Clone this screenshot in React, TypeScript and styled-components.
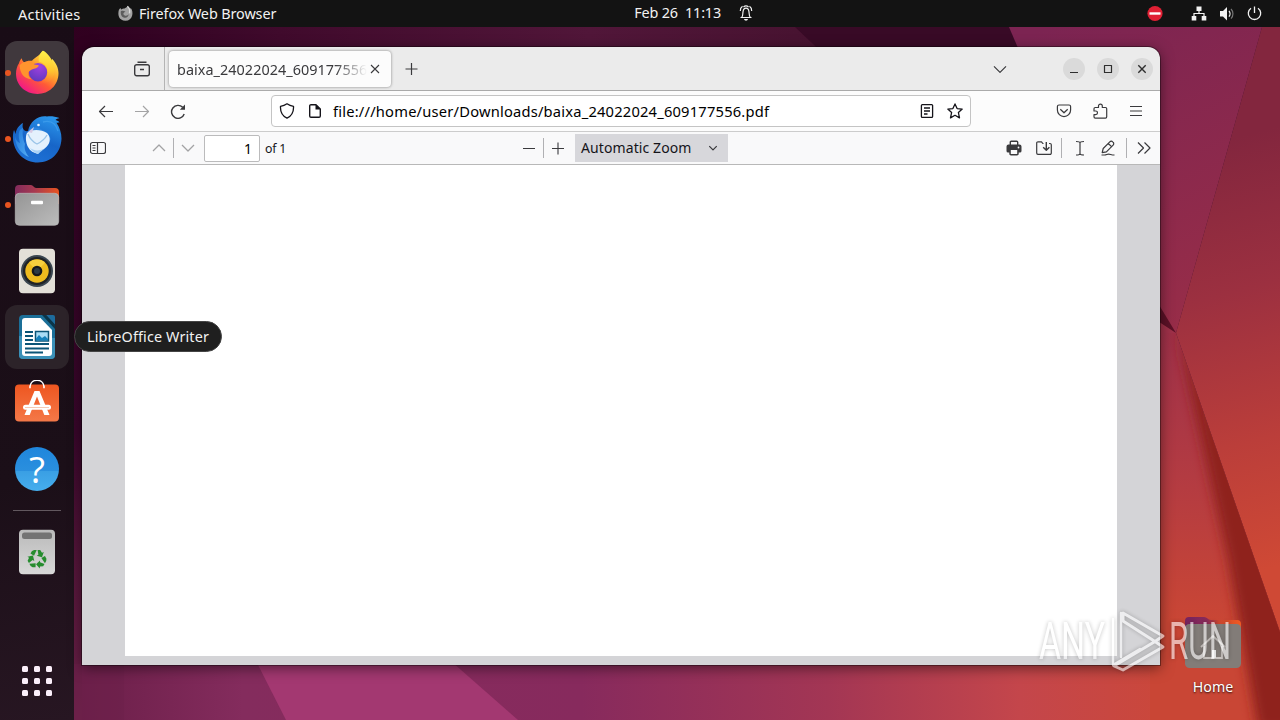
import React from 'react';
import styled, { createGlobalStyle } from 'styled-components';

const App = () => (
  <Desktop>
    <GlobalStyle />
    <Wallpaper />
    <TopBar>
      <Label $size={14.6} $spacing={0.15} $w={100}>Activities</Label>
      <FoxMini />
      <Label $size={14.4} $spacing={-0.1}>Firefox Web Browser</Label>
      <Clock>
        <Label $size={14.4} $spacing={-0.17}>Feb 26&nbsp; 11:13</Label>
        <BellIcon />
      </Clock>
      <Tray>
        <NoEntryIcon />
        <NetworkIcon />
        <VolumeIcon />
        <PowerIcon />
      </Tray>
    </TopBar>
    <Dock>
      <DockItem $bg="#40383d" $running><FirefoxIcon /></DockItem>
      <DockItem $running><ThunderbirdIcon /></DockItem>
      <DockItem $running><FilesIcon /></DockItem>
      <DockItem><RhythmboxIcon /></DockItem>
      <DockItem $bg="#2c2329"><WriterIcon /></DockItem>
      <DockItem><SoftwareIcon /></DockItem>
      <DockItem><HelpIcon /></DockItem>
      <DockDivider />
      <DockItem><TrashIcon /></DockItem>
      <AppGrid>
        {Array.from({ length: 9 }, (_, i) => <i key={i} />)}
      </AppGrid>
    </Dock>

    <BrowserWindow>
      <TabBar>
        <Slot $w={36} $ml={42}>
          <Icon>
            <path d="M3.500 1.200h9M2.600 3.700h10.800a1.900 1.900 0 0 1 1.900 1.900v7.200a1.900 1.900 0 0 1-1.900 1.900H2.600a1.900 1.900 0 0 1-1.900-1.900V5.600a1.900 1.900 0 0 1 1.900-1.900zM6 8.500h4" strokeWidth="1.400" />
          </Icon>
        </Slot>
        <TabSeparator />
        <Tab>
          <TabTitle>baixa_24022024_609177556</TabTitle>
          <Icon><path d="M4 4l8 8M12 4l-8 8" strokeWidth="1.100" /></Icon>
        </Tab>
        <Slot $w={42}>
          <Icon><path d="M7.500 2v12M1.500 8h12" /></Icon>
        </Slot>
        <WindowControls>
          <Slot $w={36}>
            <Icon><path d="M2 5.300l6 6 6-6" /></Icon>
          </Slot>
          <WindowButton $ml={45}><Icon><path d="M4 11.500h8" /></Icon></WindowButton>
          <WindowButton $ml={12}><Icon><path d="M4.500 4.500h7v7h-7z" strokeWidth="1.200" /></Icon></WindowButton>
          <WindowButton $ml={12}><Icon><path d="M4.300 4.300l7.400 7.400M11.700 4.300l-7.400 7.400" strokeWidth="1.400" /></Icon></WindowButton>
        </WindowControls>
      </TabBar>

      <NavBar>
        <Slot $w={36} $ml={6}>
          <Icon><path d="M15 8.500H1.500M7 3L1.500 8.500 7 14" /></Icon>
        </Slot>
        <Slot $w={36} $faded>
          <Icon><path d="M1 8.500h13.500M9 3l5.500 5.500L9 14" /></Icon>
        </Slot>
        <Slot $w={36}>
          <Icon>
            <path d="M14.200 11A6.500 6.500 0 1 1 12.700 4.300" strokeWidth="1.400" />
            <path d="M15 1.500v5.200H9.800z" fill="currentColor" stroke="none" />
          </Icon>
        </Slot>
        <UrlBox>
          <Slot $w={30}>
            <Icon><path d="M8 .8c1.800 1.300 4 2.200 6.500 2.600.3 5.300-1.300 9.200-6.500 11.800C2.800 12.600 1.200 8.700 1.500 3.400 4 3 6.200 2.100 8 .8z" strokeWidth="1.300" /></Icon>
          </Slot>
          <Slot $w={26}>
            <Icon>
              <path d="M4 1.700h5l4.300 4.300v7a1.300 1.300 0 0 1-1.300 1.300H4A1.300 1.300 0 0 1 2.700 13V3A1.300 1.300 0 0 1 4 1.700z" strokeWidth="1.400" />
              <path d="M8.500 1.500v5h5z" fill="currentColor" stroke="none" />
            </Icon>
          </Slot>
          <UrlText>file:///home/user/Downloads/baixa_24022024_609177556.pdf</UrlText>
          <Slot $w={28}>
            <Icon><path d="M3.400 1.600h9.200a1 1 0 0 1 1 1v10.800a1 1 0 0 1-1 1H3.400a1 1 0 0 1-1-1V2.600a1 1 0 0 1 1-1zM5 5h6M5 8h6M5 11h3.500" strokeWidth="1.300" /></Icon>
          </Slot>
          <Slot $w={28}>
            <Icon><path d="M8 .9l2.100 4.700 5.100.5-3.800 3.500 1.100 5.300L8 12.300l-4.500 2.600 1.100-5.300L.8 6.100l5.100-.5z" strokeWidth="1.300" /></Icon>
          </Slot>
        </UrlBox>
        <Slot $w={36} $ml={75}>
          <Icon><path d="M3 2h10a1.600 1.600 0 0 1 1.600 1.600V7a6.600 6.600 0 0 1-13.200 0V3.600A1.600 1.600 0 0 1 3 2zM4.300 6.200L8 9.800l3.700-3.600" /></Icon>
        </Slot>
        <Slot $w={36}>
          <Icon><path d="M2 8V5.800C2 5 2.500 4.500 3.300 4.500h3.200V3a1.900 1.900 0 0 1 3.800 0v1.500h3.200c.7 0 1.200.5 1.200 1.300v8c0 .8-.5 1.300-1.200 1.300H3.300C2.500 15.100 2 14.600 2 13.800v-2.200h1.700a1.800 1.800 0 0 0 0-3.600z" /></Icon>
        </Slot>
        <Slot $w={36}>
          <Icon><path d="M2 3.500h12M2 8h12M2 12.500h12" /></Icon>
        </Slot>
      </NavBar>

      <PdfBar>
        <PdfLeft>
          <Slot $w={28} $ml={2}>
            <Icon><path d="M2.500 2.500h11a2 2 0 0 1 2 2v7a2 2 0 0 1-2 2h-11a2 2 0 0 1-2-2v-7a2 2 0 0 1 2-2zM7.500 2.500v11M2.500 5.500h3M2.500 8h3M2.500 10.500h3" /></Icon>
          </Slot>
          <Slot $w={28} $ml={33} $faded>
            <Icon><path d="M2 11l6-6 6 6" strokeWidth="1.300" /></Icon>
          </Slot>
          <PdfSeparator />
          <Slot $w={27} $faded>
            <Icon><path d="M2 5l6 6 6-6" strokeWidth="1.300" /></Icon>
          </Slot>
          <PageNumber>1</PageNumber>
          <OfPages>of 1</OfPages>
        </PdfLeft>
        <Slot $w={28}>
          <Icon><path d="M2 8.500h12" strokeWidth="1.100" /></Icon>
        </Slot>
        <PdfSeparator />
        <Slot $w={27}>
          <Icon><path d="M8 2.500v12M2 8.500h12" strokeWidth="1.100" /></Icon>
        </Slot>
        <ZoomSelect>
          <Label $size={14} $spacing={0.1} $color="#15141a">Automatic Zoom</Label>
          <Icon $size={12}><path d="M3 5.500l5 5 5-5" strokeWidth="1.700" /></Icon>
        </ZoomSelect>
        <PdfRight>
          <Slot $w={30}>
            <Icon>
              <path d="M4.300 5V2.300c0-.6.300-1 1-1h5.400c.7 0 1 .4 1 1V5" strokeWidth="1.400" />
              <path d="M2.500 4.500h11a2 2 0 0 1 2 2V11a1.600 1.600 0 0 1-1.600 1.600h-1.200v1.200c0 1-.7 1.700-1.700 1.700H5c-1 0-1.700-.7-1.700-1.700v-1.200H2.100A1.600 1.600 0 0 1 .5 11V6.500a2 2 0 0 1 2-2z" fill="currentColor" stroke="none" />
              <path d="M4.800 10h6.400v4H4.800z" fill="#f9f9fa" stroke="none" />
              <circle cx="12.500" cy="7.500" r=".9" fill="#f9f9fa" stroke="none" />
            </Icon>
          </Slot>
          <Slot $w={30}>
            <Icon>
              <path d="M7.500 3.500H6.800L5.500 1.800H2A1.300 1.300 0 0 0 .7 3.100v10A1.300 1.300 0 0 0 2 14.400h12a1.300 1.300 0 0 0 1.300-1.300V4.800A1.300 1.300 0 0 0 14 3.500h-1" />
              <path d="M10.300 2v8M7.200 7.200l3.100 3.100 3.100-3.100" strokeWidth="1.400" />
            </Icon>
          </Slot>
          <PdfSeparator $ml={2} />
          <Slot $w={28} $ml={4}>
            <Icon><path d="M4 1.500c2.300 0 4 .2 4 1.500 0-1.300 1.700-1.500 4-1.500M8 3v10.500M4 15c2.300 0 4-.2 4-1.500 0 1.300 1.700 1.500 4 1.500" /></Icon>
          </Slot>
          <Slot $w={28}>
            <Icon>
              <path d="M2.200 12.700l1-4.200 6.600-6.700a2 2 0 0 1 2.900 0l.4.400a2 2 0 0 1 0 2.900l-6.700 6.700zM8.300 3.500l3.200 3.200" />
              <path d="M1.500 15h3c1.800 0 2.600-.9 4-.9 1.600 0 2.500.900 4 .900h2" />
            </Icon>
          </Slot>
          <PdfSeparator $ml={4} />
          <Slot $w={29} $ml={2}>
            <Icon><path d="M2 2.500L7.500 8 2 13.500M8.500 2.500L14 8l-5.500 5.500" /></Icon>
          </Slot>
        </PdfRight>
      </PdfBar>
      <Viewer>
        <Page />
      </Viewer>
    </BrowserWindow>

    <Tooltip>
      <Label $size={14.4} $spacing={0.13}>LibreOffice Writer</Label>
    </Tooltip>
    <HomeShortcut>
      <HomeFolder />
      <Label $size={14.2} $color="#fff">Home</Label>
    </HomeShortcut>
    <Watermark />
  </Desktop>
);

const Wallpaper = () => (
  <WallpaperSvg viewBox="0 0 1280 720">
    <defs>
      <linearGradient id="base" gradientUnits="userSpaceOnUse" x1="74" y1="0" x2="1010" y2="0">
        <stop offset="0" stopColor="#2d001f" />
        <stop offset=".22" stopColor="#400a2c" />
        <stop offset=".55" stopColor="#511639" />
        <stop offset=".77" stopColor="#481331" />
        <stop offset="1" stopColor="#3f0d2b" />
      </linearGradient>
      <linearGradient id="leftEdge" x1="0" y1="0" x2="0" y2="1">
        <stop offset="0" stopColor="#30001f" />
        <stop offset=".6" stopColor="#38062a" />
        <stop offset=".78" stopColor="#541539" />
        <stop offset="1" stopColor="#6d2149" />
      </linearGradient>
      <linearGradient id="bottom" gradientUnits="userSpaceOnUse" x1="74" y1="0" x2="1200" y2="0">
        <stop offset="0" stopColor="#6a1e48" />
        <stop offset=".15" stopColor="#842c5d" />
        <stop offset=".45" stopColor="#872a5d" />
        <stop offset=".67" stopColor="#a33654" />
        <stop offset=".84" stopColor="#c4464b" />
        <stop offset="1" stopColor="#cc4837" />
      </linearGradient>
      <linearGradient id="upper" gradientUnits="userSpaceOnUse" x1="1050" y1="27" x2="1190" y2="330">
        <stop offset="0" stopColor="#7c2452" />
        <stop offset="1" stopColor="#982d48" />
      </linearGradient>
      <linearGradient id="right" gradientUnits="userSpaceOnUse" x1="1190" y1="150" x2="1300" y2="560">
        <stop offset="0" stopColor="#83263e" />
        <stop offset=".35" stopColor="#9c3040" />
        <stop offset=".7" stopColor="#bb3e3a" />
        <stop offset="1" stopColor="#cf4935" />
      </linearGradient>
      <linearGradient id="lower" gradientUnits="userSpaceOnUse" x1="0" y1="333" x2="0" y2="620">
        <stop offset="0" stopColor="#9f3149" />
        <stop offset=".5" stopColor="#b33b42" />
        <stop offset="1" stopColor="#c94635" />
      </linearGradient>
      <filter id="soft" x="-50%" y="-10%" width="200%" height="120%">
        <feGaussianBlur stdDeviation="6" />
      </filter>
      <clipPath id="belowFold">
        <path d="M1120 333H1176L1280 632V720H1120z" />
      </clipPath>
    </defs>
    <rect width="1280" height="720" fill="url(#base)" />
    <path d="M795 27L830 60H1030V27z" fill="#380a26" />
    <rect width="90" height="720" fill="url(#leftEdge)" />
    <rect x="82" y="655" width="1198" height="65" fill="url(#bottom)" />
    <rect x="74" y="664" width="50" height="56" fill="#6b1f49" opacity=".5" />
    <path d="M253 655L286 720H518L444 655z" fill="#a33871" />
    <path d="M1009 27L1140 333H1176L1262 27z" fill="url(#upper)" />
    <path d="M1262 27L1176 333L1280 632V27z" fill="url(#right)" />
    <path d="M1150 310L1176 333L1280 632V720H1150z" fill="url(#lower)" />
    <g clipPath="url(#belowFold)">
      <path d="M1176 326L1228 560L1258 730H1310V640z" fill="#8f241d" filter="url(#soft)" />
    </g>
    <path d="M1176 333L1150 290V316z" fill="#5c1127" />
  </WallpaperSvg>
);

const FoxMini = () => (
  <SmallIcon $w={15} $mr={6} viewBox="0 0 16 16">
    <path d="M1 4l1.500-2 1 1.600C4.500 2.800 6 2.500 7 2.700 8 2 9.500 1.600 10 .3c1.500.7 2 2 2.600 2.700.6-.1.900-.5 1-1C17 6 16 15.500 8 15.700.5 15.500-.5 9 1 4z" fill="#a3a3a3" />
    <path d="M3 5.500c2-1 3 .2 5 .3-1 1-2 1-2.300 2.600 1 2.500 4.500 2.500 5.800.2C11.300 11.500 9 13 7 12.500 4 12 2.500 9 3 5.500z" fill="#5c5c5c" />
    <path d="M10 .3c2 1.500 3 4 2.300 7.500" stroke="#d8d8d8" strokeWidth="1.500" fill="none" />
  </SmallIcon>
);

const BellIcon = () => (
  <SmallIcon $w={16} $ml={17} viewBox="0 0 16 16">
    <g fill="none" stroke="#f2f2f2" strokeWidth="1.200">
      <path d="M2.500 12.500h11M3.700 12.300c1.300-1.300 1-3.500 1.300-5.500C5.300 4.500 6.300 3.200 8 3.200s2.700 1.300 3 3.600c.3 2 0 4.200 1.300 5.500" />
      <path d="M4.500 1.300C3 2.300 2.200 4 2.300 6M11.500 1.300c1.500 1 2.300 2.700 2.200 4.700M5.500 2C7 .6 9 .6 10.500 2" />
    </g>
    <path d="M6 14h4c-.5 2.200-3.500 2.200-4 0z" fill="#f2f2f2" />
  </SmallIcon>
);

const NoEntryIcon = () => (
  <SmallIcon $w={16} $mr={28} viewBox="0 0 16 16">
    <circle cx="8" cy="7.500" r="7.600" fill="#e02034" />
    <rect x="2.500" y="6.300" width="11" height="2.400" fill="#fff" />
  </SmallIcon>
);

const NetworkIcon = () => (
  <SmallIcon $w={16} $mr={12} viewBox="0 0 16 16">
    <path d="M5.500 .5h5V5h-5zM.7 10h4.600v4.500H.7zM10.700 10h4.600v4.500h-4.600z" fill="#f2f2f2" />
    <path d="M8 5v2.500M3 10V7.500h10V10" stroke="#f2f2f2" strokeWidth="1.200" fill="none" />
  </SmallIcon>
);

const VolumeIcon = () => (
  <SmallIcon $w={16} $mr={12} viewBox="0 0 16 16">
    <path d="M1 5h3l4-4v13.500L4 10.500H1z" fill="#f2f2f2" />
    <path d="M10 5c1.300 1.500 1.300 4.100 0 5.600" stroke="#f2f2f2" strokeWidth="1.300" fill="none" />
    <path d="M12 3c2.600 2.600 2.600 7 0 9.600" stroke="#777" strokeWidth="1.200" fill="none" />
  </SmallIcon>
);

const PowerIcon = () => (
  <SmallIcon $w={16} viewBox="0 0 16 16">
    <path d="M4 2.200a6.200 6.200 0 1 0 7 0M7.500 .5V7" stroke="#f2f2f2" strokeWidth="1.300" fill="none" />
  </SmallIcon>
);

const FirefoxIcon = () => (
  <svg width="48" height="48" viewBox="0 .7 48 48">
    <defs>
      <linearGradient id="ffBody" x1=".85" y1=".1" x2=".2" y2=".95">
        <stop offset="0" stopColor="#fff44f" />
        <stop offset=".35" stopColor="#ffa32c" />
        <stop offset=".6" stopColor="#ff5a36" />
        <stop offset="1" stopColor="#f0148c" />
      </linearGradient>
      <radialGradient id="ffGlobe" cx=".6" cy=".2" r=".9">
        <stop offset="0" stopColor="#a040e0" />
        <stop offset="1" stopColor="#5a38bc" />
      </radialGradient>
      <linearGradient id="ffTail" x1="0" y1="0" x2="0" y2="1">
        <stop offset="0" stopColor="#fff14a" />
        <stop offset=".6" stopColor="#ffc52f" />
        <stop offset="1" stopColor="#ff8a2e" stopOpacity="0" />
      </linearGradient>
    </defs>
    <path d="M6 15c.5-2 1.500-3.800 2.700-5 .3 2 1.300 3.300 2.300 4 2-1.300 5-2 8-1.500C22 9 26 8 29.500 2.500c4 2 7 6.500 8.500 10.500.8-.8 1-1.500 1-2.500 4 4 6.500 9 6.500 14.500C45.500 37 36 45.700 24.500 45.700 12.500 45.700 3 37 3 25.500 3 21.500 4 18 6 15z" fill="url(#ffBody)" />
    <circle cx="25" cy="24" r="9.200" fill="url(#ffGlobe)" />
    <path d="M30.500 2.500C26.500 5 25 10 26 13.500c5 1 8.500 4.500 8.500 10.500-.5 6-5 10.500-11 11 8 3 17-2 18-11C42 14 36 6 30.500 2.500z" fill="url(#ffTail)" />
    <path d="M6.500 17c4-4.500 10-4.500 15-.8 2 .5 3.500.5 4.500 1.300-1.500 2.500-4.500 3-6.500 3.500-1.500 1-3 1-4 3.300-.5 3.200 1.500 5.700 3.500 6.700C12 31 7 26 6.500 17z" fill="#ff942e" />
  </svg>
);

const ThunderbirdIcon = () => (
  <svg width="50" height="50" viewBox="0 0 50 50">
    <defs>
      <linearGradient id="tbBody" x1=".7" y1="0" x2=".3" y2="1">
        <stop offset="0" stopColor="#2a94ea" />
        <stop offset=".5" stopColor="#1765c8" />
        <stop offset="1" stopColor="#1f72d6" />
      </linearGradient>
      <linearGradient id="tbWing" x1="0" y1="0" x2="1" y2="1">
        <stop offset="0" stopColor="#1f78d8" />
        <stop offset="1" stopColor="#54acf4" />
      </linearGradient>
    </defs>
    <path d="M11 9C9.500 14 12 18 16 17 18 7 27 1 35 2.500c4-.5 8 0 12.500 1.500-2 .5-3 1-4 2 2 .5 3 1 4 2.500-1.500-.3-2 0-3 .3 3 4.500 5 10 5 16C49 39 39 48.500 26 48.500 12 48.500 2 38 1 25c-.3-3 .2-7 1-9 .8 1.500 1 3 1.500 4C4 15.500 7 11 11 9z" fill="url(#tbBody)" />
    <path d="M3 22c0 10 6 18 14 21-4-5-5-9-4-13-2-5-3-9-2-16C6 15 6 22 8 29 5 28 3.500 25 3 22z" fill="url(#tbWing)" />
    <path d="M17 16c3-4 9-3 13 0 5 2 8 6 9 10l-5-3c-5-6-11-7-17-5z" fill="#2d86e0" />
    <path d="M15 19c4-4 14-4 20 0 3 3 4 8 1 12-2 3-5 5-8 6l-2 3c-4-1-8-3-10-7-2-4-3-10-1-14z" fill="#e4f1fd" />
    <path d="M16 20c2 5 5 8 9 10 4-2 8-5 10-9" fill="none" stroke="#9ac4e8" strokeWidth="1.300" />
    <path d="M18 34c4 3 9 3 14 1-2 2-4 3-6 5-3-1-6-3-8-6z" fill="#a9d2f6" />
    <path d="M16 18l6-5-2 6z" fill="#d8c9e4" />
    <circle cx="26.500" cy="11" r="1.300" fill="#e8f5ff" />
    <path d="M31 8c8-2 13 2 15 9" stroke="#48a5f0" strokeWidth="1.300" fill="none" opacity=".6" />
  </svg>
);

const FilesIcon = () => (
  <svg width="46" height="44" viewBox="0 0 46 44">
    <defs>
      <linearGradient id="folderBack" x1="0" y1="0" x2="1" y2="0">
        <stop offset="0" stopColor="#822b5c" />
        <stop offset=".45" stopColor="#a83a50" />
        <stop offset="1" stopColor="#e95420" />
      </linearGradient>
      <linearGradient id="folderFront" x1="0" y1="0" x2="1" y2="1">
        <stop offset="0" stopColor="#959595" />
        <stop offset="1" stopColor="#bcbcbc" />
      </linearGradient>
    </defs>
    <path d="M1 6a4 4 0 0 1 4-4h12c2 0 3 3 5 3h19a4 4 0 0 1 4 4v12H1z" fill="url(#folderBack)" />
    <rect x="1.300" y="10.300" width="43.400" height="32" rx="4" fill="url(#folderFront)" stroke="#b9b9b9" strokeWidth=".7" />
    <rect x="17" y="17.800" width="12" height="3.400" rx="1" fill="#fff" />
  </svg>
);

const RhythmboxIcon = () => (
  <svg width="38" height="46" viewBox="0 0 38 46">
    <rect x="1" y=".7" width="36" height="44.600" rx="4" fill="#e3e0d8" />
    <circle cx="19" cy="23" r="16" fill="#3a4650" />
    <circle cx="19" cy="23" r="14" fill="#202326" />
    <circle cx="19" cy="23" r="11.700" fill="#eebb1e" />
    <path d="M19 23L11 14.700a11.500 11.500 0 0 1 16 0z" fill="#f7cf3e" />
    <circle cx="19" cy="23" r="5.300" fill="#17191c" />
    <circle cx="19" cy="23" r="3" fill="#2c3a45" />
  </svg>
);

const WriterIcon = () => (
  <svg width="38" height="46" viewBox="0 0 38 46">
    <path d="M1 5a4 4 0 0 1 4-4h22l10 11v29a4 4 0 0 1-4 4H5a4 4 0 0 1-4-4z" fill="#1b6f98" />
    <path d="M1 22l36 2v17a4 4 0 0 1-4 4H5a4 4 0 0 1-4-4z" fill="#3b91b8" />
    <path d="M28 1h7a2 2 0 0 1 2 2v8z" fill="#1d6b9c" />
    <path d="M24 1h4l9 9.500V15z" fill="#0b3549" />
    <path d="M4 7a3 3 0 0 1 3-3h15.500L34 16v23a3 3 0 0 1-3 3H7a3 3 0 0 1-3-3z" fill="#fff" />
    <path d="M7 18h8M7 22h8M7 26h8M7 30h24M7 34.500h24M7 38.500h18" stroke="#0b5577" strokeWidth="1.900" />
    <rect x="17.500" y="17.500" width="13" height="9.500" fill="#a8dcf5" stroke="#0b5577" strokeWidth="1.500" />
    <path d="M18 26.500v-2l3-3.500 3 3 3-2 3 3v1.500z" fill="#1681ba" />
  </svg>
);

const SoftwareIcon = () => (
  <svg width="46" height="46" viewBox="0 2 46 46">
    <defs>
      <linearGradient id="bag" x1="0" y1="0" x2="0" y2="1">
        <stop offset="0" stopColor="#ee5620" />
        <stop offset="1" stopColor="#f47848" />
      </linearGradient>
    </defs>
    <rect x="1" y="6.500" width="44" height="37" rx="4" fill="url(#bag)" />
    <path d="M16 9.500V7.500C17 -.5 29 -.5 30 7.500v2" fill="none" stroke="#fff" strokeWidth="1.600" transform="translate(0 .8)" />
    <path d="M20.500 13h5L35.500 37h-5.200L23 18.500 15.700 37h-5.200z" fill="#fff" />
    <rect x="9" y="26.800" width="28" height="5" rx="2.500" fill="#fff" />
    <path d="M11 29.500h24" stroke="#f3b193" strokeWidth=".7" />
  </svg>
);

const HelpIcon = () => (
  <HelpBadge>?</HelpBadge>
);

const TrashIcon = () => (
  <svg width="38" height="46" viewBox="0 0 38 46">
    <defs>
      <linearGradient id="bin" x1="0" y1="0" x2="0" y2="1">
        <stop offset="0" stopColor="#bababa" />
        <stop offset="1" stopColor="#d8d8d8" />
      </linearGradient>
    </defs>
    <rect x="1" y=".7" width="36" height="44.600" rx="4" fill="url(#bin)" />
    <rect x="4" y="3.500" width="30" height="6.500" rx="2.500" fill="#737373" />
    <g transform="translate(19 30)" fill="#268c2e">
      {[0, 120, 240].map(angle => (
        <g key={angle} transform={`rotate(${angle})`}>
          <path d="M-2.800-9H-.3L-3-3.300-6.500-5.400-5-8z" />
          <path d="M.6-9H3.200L5-6.300l1.800-.8L5-1.800-.3-3.300l1.700-1z" />
        </g>
      ))}
    </g>
  </svg>
);

const HomeFolder = () => (
  <svg width="58" height="54" viewBox="0 0 58 54">
    <defs>
      <linearGradient id="homeBack" x1="0" y1="0" x2="1" y2="0">
        <stop offset="0" stopColor="#75235f" />
        <stop offset=".4" stopColor="#8a2b58" />
        <stop offset=".6" stopColor="#c8452f" />
        <stop offset="1" stopColor="#f05a22" />
      </linearGradient>
    </defs>
    <path d="M1 6a4 4 0 0 1 4-4h15c3 0 4 3 7 3h26a4 4 0 0 1 4 4v14H1z" fill="url(#homeBack)" />
    <rect x="1" y="9" width="56" height="44" rx="4.500" fill="#827c78" />
    <path d="M17 32l12-11 12 11M20 31v12h18V31" fill="none" stroke="#c9c4c1" strokeWidth="1.800" />
    <path d="M28 35h4v8h-4z" fill="#eee" />
  </svg>
);

const Watermark = () => (
  <WatermarkSvg width="206" height="72" viewBox="0 0 206 72">
    <text x="3" y="53" textLength="66" lengthAdjust="spacingAndGlyphs">ANY</text>
    <g fill="none" strokeLinejoin="round" strokeLinecap="round" strokeWidth="3">
      <path d="M87 7l40 23-8 5.500 8 5.500-40 23-9-4 41-24.500L87 15z" fill="#888" fillOpacity=".12" />
      <path d="M85 7v44M77 13v46l27-16" strokeWidth="2.400" />
    </g>
    <text x="133" y="53" textLength="62" lengthAdjust="spacingAndGlyphs">RUN</text>
  </WatermarkSvg>
);

export default App;

const GlobalStyle = createGlobalStyle`
  * {
    box-sizing: border-box;
  }
  body {
    margin: 0;
    overflow: hidden;
    font-family: 'Noto Sans', 'Open Sans', sans-serif;
  }
`;

const Desktop = styled.div`
  position: relative;
  width: 1280px;
  height: 720px;
  overflow: hidden;
  background: #2c001e;
`;

const WallpaperSvg = styled.svg`
  position: absolute;
  inset: 0;
`;

const Label = styled.span<{ $size: number; $spacing?: number; $color?: string; $w?: number }>`
  font-size: ${props => props.$size}px;
  letter-spacing: ${props => props.$spacing || 0}px;
  color: ${props => props.$color || '#f2f2f2'};
  width: ${props => (props.$w ? `${props.$w}px` : 'auto')};
  line-height: 20px;
  white-space: nowrap;
`;

const SmallIcon = styled.svg<{ $w: number; $ml?: number; $mr?: number }>`
  width: ${props => props.$w}px;
  height: ${props => props.$w}px;
  margin-left: ${props => props.$ml || 0}px;
  margin-right: ${props => props.$mr || 0}px;
  flex: none;
  overflow: visible;
`;

const TopBar = styled.header`
  position: relative;
  display: flex;
  align-items: center;
  height: 27px;
  padding: 0 17px 0 18px;
  background: #131313;
`;

const Clock = styled.div`
  display: flex;
  align-items: center;
  margin-left: 358px;
  padding-bottom: 1px;
`;

const Tray = styled.div`
  display: flex;
  align-items: center;
  margin-left: auto;
`;

const Dock = styled.nav`
  position: relative;
  display: flex;
  flex-direction: column;
  align-items: center;
  gap: 2px;
  width: 74px;
  height: 693px;
  padding-top: 14px;
  background: linear-gradient(170deg, #190c16 0%, #1b0f18 65%, #271622 100%);
`;

const DockItem = styled.div<{ $bg?: string; $running?: boolean }>`
  position: relative;
  display: flex;
  align-items: center;
  justify-content: center;
  width: 64px;
  height: 64px;
  flex: none;
  border-radius: 12px;
  background: ${props => props.$bg || 'transparent'};
  &::before {
    content: '';
    display: ${props => (props.$running ? 'block' : 'none')};
    position: absolute;
    left: 0;
    top: 29px;
    width: 6px;
    height: 6px;
    border-radius: 50%;
    background: #e95420;
  }
`;

const HelpBadge = styled.div`
  width: 44px;
  height: 44px;
  border-radius: 50%;
  background: linear-gradient(#1f86dc 0%, #2a8fde 54%, #3a9fe4 55%, #46aeee 100%);
  color: #fff;
  font-family: 'Open Sans', sans-serif;
  font-size: 37px;
  line-height: 44px;
  text-align: center;
`;

const DockDivider = styled.div`
  width: 48px;
  height: 1px;
  margin: 7px 0;
  background: #62585f;
`;

const AppGrid = styled.div`
  display: grid;
  grid-template-columns: repeat(3, 6px);
  gap: 6px;
  margin-top: 80px;
  & i {
    height: 6px;
    border-radius: 1.5px;
    background: #fbeffa;
  }
`;

const BrowserWindow = styled.main`
  position: absolute;
  left: 82px;
  top: 47px;
  display: flex;
  flex-direction: column;
  width: 1078px;
  height: 618px;
  overflow: hidden;
  border-radius: 12px 12px 0 0;
  background: #ebebeb;
  color: #3a3a3d;
  box-shadow: 0 0 0 1px rgba(0, 0, 0, 0.35), 0 3px 14px rgba(0, 0, 0, 0.5);
`;

const Slot = styled.div<{ $w: number; $ml?: number; $faded?: boolean }>`
  display: flex;
  justify-content: center;
  align-items: center;
  flex: none;
  width: ${props => props.$w}px;
  margin-left: ${props => props.$ml || 0}px;
  opacity: ${props => (props.$faded ? 0.45 : 1)};
`;

const Icon = styled.svg.attrs({ viewBox: '0 0 16 16' })<{ $size?: number }>`
  width: ${props => props.$size || 16}px;
  height: ${props => props.$size || 16}px;
  flex: none;
  fill: none;
  stroke: currentColor;
  stroke-width: 1.2;
  stroke-linejoin: round;
`;

const TabBar = styled.div`
  display: flex;
  align-items: center;
  height: 44px;
  padding-right: 7px;
  border-bottom: 1px solid #aaa;
`;

const TabSeparator = styled.div`
  width: 1px;
  height: 43px;
  margin: 0 3px 0 4px;
  background: #b4b4b4;
`;

const Tab = styled.div`
  display: flex;
  align-items: center;
  width: 222px;
  height: 36px;
  margin-left: 1px;
  padding: 0 8px;
  border-radius: 4px;
  background: #fcfcfc;
  box-shadow: 0 0 3px rgba(0, 0, 0, 0.45);
`;

const TabTitle = styled.div`
  width: 190px;
  padding-top: 2px;
  font-size: 14.4px;
  letter-spacing: 0.05px;
  white-space: nowrap;
  mask-image: linear-gradient(to left, transparent, #000 32px);
`;

const WindowControls = styled.div`
  display: flex;
  align-items: center;
  margin-left: auto;
`;

const WindowButton = styled.div<{ $ml: number }>`
  display: flex;
  align-items: center;
  justify-content: center;
  width: 22px;
  height: 22px;
  margin-left: ${props => props.$ml}px;
  border-radius: 50%;
  background: #dadada;
  color: #2e2e2e;
`;

const NavBar = styled.div`
  display: flex;
  align-items: center;
  height: 41px;
  border-bottom: 1px solid #ccc;
  background: #fcfcfc;
`;

const UrlBox = styled.div`
  display: flex;
  align-items: center;
  width: 700px;
  height: 32px;
  margin-left: 75px;
  padding-right: 1px;
  border: 1px solid #c4c4c4;
  border-radius: 4px;
  background: #fff;
  color: #15141a;
`;

const UrlText = styled.div`
  flex: 1;
  padding-left: 5px;
  font-size: 14.7px;
  letter-spacing: 0.2px;
  color: #000;
  white-space: nowrap;
`;

const PdfBar = styled.div`
  display: flex;
  align-items: center;
  height: 33px;
  border-bottom: 1px solid #b8b8b8;
  background: #f9f9fa;
`;

const PdfLeft = styled.div`
  display: flex;
  align-items: center;
  width: 433px;
`;

const PdfSeparator = styled.div<{ $ml?: number }>`
  width: 1px;
  height: 20px;
  margin-left: ${props => props.$ml || 0}px;
  background: #b0b0b3;
`;

const PageNumber = styled.div`
  width: 56px;
  height: 27px;
  margin: 0 5px 0 3px;
  padding-right: 7px;
  border: 1px solid #bbbbbc;
  border-radius: 2px;
  background: #fff;
  color: #000;
  font-size: 14px;
  line-height: 26px;
  text-align: right;
`;

const OfPages = styled.span`
  padding-top: 1px;
  color: #15141a;
  font-size: 12.3px;
  letter-spacing: -0.2px;
`;

const ZoomSelect = styled.div`
  display: flex;
  align-items: center;
  justify-content: space-between;
  width: 153px;
  height: 28px;
  margin-left: 4px;
  padding: 0 9px 0 6px;
  background: #d7d7db;
`;

const PdfRight = styled.div`
  display: flex;
  align-items: center;
  margin-left: auto;
  padding-right: 2px;
`;

const Viewer = styled.div`
  flex: 1;
  padding: 0 43px 9px;
  background: #d4d4d7;
`;

const Page = styled.div`
  height: 100%;
  background: #fff;
`;

const Tooltip = styled.div`
  position: absolute;
  left: 74px;
  top: 321px;
  display: flex;
  align-items: center;
  width: 148px;
  height: 31px;
  padding-left: 12px;
  border: 1px solid #444;
  border-radius: 16px;
  background: #1f1f1f;
`;

const HomeShortcut = styled.div`
  position: absolute;
  left: 1184px;
  top: 615px;
  display: flex;
  flex-direction: column;
  align-items: center;
  gap: 8px;
  width: 58px;
  text-shadow: 0 1px 2px rgba(0, 0, 0, 0.8);
`;

const WatermarkSvg = styled.svg`
  position: absolute;
  left: 1036px;
  top: 606px;
  overflow: visible;
  opacity: 0.6;
  filter: drop-shadow(0 0 2px rgba(0, 0, 0, 0.4));
  & text {
    font-family: Roboto, sans-serif;
    font-size: 51px;
    font-weight: 400;
    fill: #fff;
  }
  & g {
    stroke: #fff;
  }
`;
